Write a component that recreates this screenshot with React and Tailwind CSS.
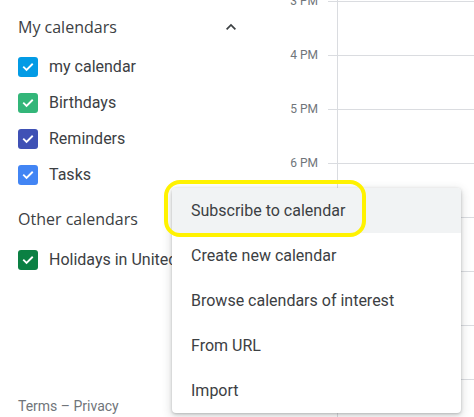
import React from "react";

const Check = ({ color }) => (
  <div className={`w-[20px] h-[20px] rounded-[3px] flex items-center justify-center ${color}`}>
    <svg width="14" height="14" viewBox="0 0 24 24" fill="none">
      <path d="M5 12.5l4.5 4.5L19 7.5" stroke="white" strokeWidth="3.2" strokeLinecap="square" />
    </svg>
  </div>
);

const Item = ({ color, label }) => (
  <div className="h-[36px] flex items-center gap-[11px] whitespace-nowrap">
    <Check color={color} />
    <span className="text-[16px] text-[#3c4043]">{label}</span>
  </div>
);

const hours = ["3 PM", "4 PM", "5 PM", "6 PM", "", "", "", ""];

export default function App() {
  return (
    <div className="relative w-[474px] h-[417px] overflow-hidden bg-white flex font-['Roboto',sans-serif]">
      {/* Sidebar */}
      <div className="w-[256px] shrink-0 flex flex-col pl-[18px] pr-[13px] pb-[1px]">
        <div className="mt-[9px] h-[36px] flex items-center justify-between">
          <span className="text-[16px] font-medium text-[#3c4043] font-['Open_Sans',sans-serif]">My calendars</span>
          <div className="w-[24px] h-[24px] flex items-center justify-center">
            <svg width="14" height="14" viewBox="0 0 24 24" fill="none">
              <path d="M4.5 16l7.5-7.5 7.5 7.5" stroke="#3c4043" strokeWidth="3" />
            </svg>
          </div>
        </div>
        <div className="mt-[4px] flex flex-col">
          <Item color="bg-[#039be5]" label="my calendar" />
          <Item color="bg-[#33b679]" label="Birthdays" />
          <Item color="bg-[#3f51b5]" label="Reminders" />
          <Item color="bg-[#4285f4]" label="Tasks" />
        </div>
        <div className="mt-[8px] h-[36px] flex items-center">
          <span className="text-[16px] font-medium text-[#3c4043] font-['Open_Sans',sans-serif]">Other calendars</span>
        </div>
        <div className="mt-[5px]">
          <Item color="bg-[#0b8043]" label="Holidays in United States" />
        </div>
        <div className="mt-auto h-[20px] flex items-center text-[14px] text-[#70757a] whitespace-nowrap">
          Terms – Privacy
        </div>
      </div>

      {/* Time grid */}
      <div className="flex-1 flex flex-col">
        <div className="h-[1px] shrink-0 flex">
          <div className="w-[81px] shrink-0" />
          <div className="flex-1 border-l border-[#dadce0]" />
        </div>
        {hours.map((h, i) => (
          <div key={i} className="h-[54px] shrink-0 flex">
            <div className="w-[72px] shrink-0 relative">
              <span className="absolute right-[10px] top-0 -translate-y-1/2 text-[12px] leading-[14px] text-[#70757a] whitespace-nowrap">
                {h}
              </span>
            </div>
            <div className="w-[9px] shrink-0 border-t border-[#dadce0]" />
            <div className="flex-1 border-t border-l border-[#dadce0]" />
          </div>
        ))}
      </div>

      {/* Menu */}
      <div className="absolute left-[172px] top-[188px] w-[289px] bg-white rounded-[4px] shadow-[0_3px_8px_2px_rgba(60,64,67,0.15),0_1px_3px_rgba(60,64,67,0.3)] flex flex-col overflow-hidden">
        {["Subscribe to calendar", "Create new calendar", "Browse calendars of interest", "From URL", "Import"].map((t, i) => (
          <div
            key={t}
            className={`h-[45px] flex items-center pl-[19px] text-[16px] text-[#3c4043] ${i === 0 ? "bg-[#f1f3f4]" : ""}`}
          >
            {t}
          </div>
        ))}
      </div>

      {/* Yellow highlight */}
      <div className="absolute left-[164px] top-[180px] w-[202px] h-[57px] border-[4px] border-[#fff200] rounded-[16px]" />
    </div>
  );
}
